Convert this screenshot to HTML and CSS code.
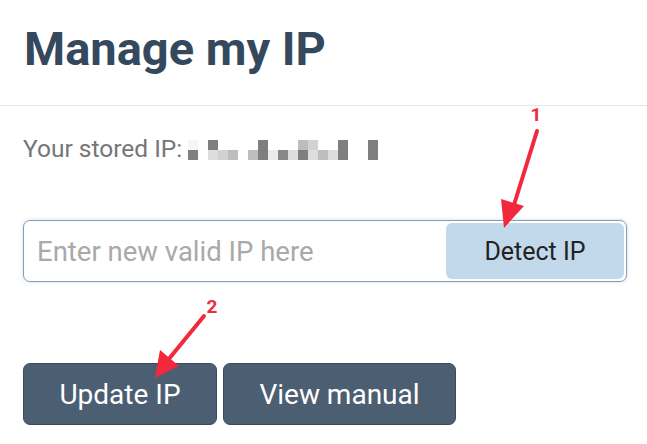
FILE: index.html
```html
<!DOCTYPE html>
<html>
<head>
<meta charset="utf-8">
<link rel="stylesheet" href="styles.css">
</head>
<body>
<header class="header">
  <h1 class="title">Manage my IP</h1>
</header>
<main class="content">
  <p class="stored">Your stored IP:
    <span class="pix">
      <span class="col"><i class="c1"></i><i class="c9"></i></span>
      <span class="col"><i></i><i></i></span>
      <span class="col"><i class="c8"></i><i class="c3"></i></span>
      <span class="col"><i></i><i class="c4"></i></span>
      <span class="col"><i></i><i class="c5"></i></span>
      <span class="col"><i></i><i></i></span>
      <span class="col"><i></i><i class="c5"></i></span>
      <span class="col"><i class="c8"></i><i class="c8"></i></span>
      <span class="col"><i></i><i class="c2"></i></span>
      <span class="col"><i></i><i class="c7"></i></span>
      <span class="col"><i></i><i class="c3"></i></span>
      <span class="col"><i class="c5"></i><i class="c8"></i></span>
      <span class="col"><i class="c4"></i><i class="c3"></i></span>
      <span class="col"><i></i><i class="c5"></i></span>
      <span class="col"><i></i><i class="c3"></i></span>
      <span class="col"><i class="c8"></i><i class="c8"></i></span>
      <span class="col"><i></i><i></i></span>
      <span class="col"><i></i><i></i></span>
      <span class="col"><i class="c8"></i><i class="c8"></i></span>
    </span>
  </p>
  <div class="ipgroup">
    <input class="ipinput" type="text" placeholder="Enter new valid IP here">
    <button class="detect">Detect IP</button>
  </div>
  <div class="actions">
    <button class="btn">Update IP</button>
    <button class="btn">View manual</button>
  </div>
</main>
<svg class="annot" width="647" height="444" viewBox="0 0 647 444">
  <text x="536" y="121" class="num" text-anchor="middle">1</text>
  <line x1="537" y1="131" x2="513" y2="208" class="aline"/>
  <polygon points="504,228 501,199 524,206" class="ahead"/>
  <text x="212" y="313" class="num" text-anchor="middle">2</text>
  <line x1="204" y1="316" x2="168" y2="360" class="aline"/>
  <polygon points="155,378 160,350 179,366" class="ahead"/>
</svg>
</body>
</html>
```
FILE: styles.css
```css
html, body {
  margin: 0;
  padding: 0;
  background: #ffffff;
}
body {
  font-family: Roboto, "Liberation Sans", sans-serif;
  position: relative;
  width: 647px;
  height: 444px;
  overflow: hidden;
}
.header {
  padding: 20px 24px 0;
  height: 85px;
  border-bottom: 1px solid #e6e6e6;
}
.title {
  margin: 0;
  font-size: 47px;
  line-height: 58px;
  font-weight: 700;
  color: #34495e;
}
.content {
  padding: 0 20px 0 23px;
}
.stored {
  margin: 29px 0 0;
  font-size: 24.5px;
  line-height: 28px;
  color: #767676;
  display: flex;
  align-items: center;
}
.pix {
  display: inline-flex;
  margin-left: 6px;
  margin-top: 2px;
}
.col {
  display: flex;
  flex-direction: column;
}
.col i {
  display: block;
  width: 10px;
  height: 10px;
  background: #ffffff;
}
.col i.c1 { background: #f5f5f5; }
.col i.c2 { background: #ececec; }
.col i.c3 { background: #dddddd; }
.col i.c4 { background: #d2d2d2; }
.col i.c5 { background: #bdbdbd; }
.col i.c7 { background: #888888; }
.col i.c8 { background: #7f7f7f; }
.col i.c9 { background: #808080; }
.ipgroup {
  margin-top: 57px;
  height: 62px;
  box-sizing: border-box;
  border: 1px solid #8c9cb0;
  border-radius: 7px;
  box-shadow: 0 0 4px rgba(120, 160, 210, 0.35);
  display: flex;
  align-items: stretch;
  padding: 2px;
  background: #fff;
}
.ipinput {
  flex: 1;
  border: 0;
  outline: none;
  padding: 0 0 0 11px;
  font-family: Roboto, "Liberation Sans", sans-serif;
  font-size: 27.5px;
  color: #333;
  background: transparent;
  min-width: 0;
}
.ipinput::placeholder {
  color: #a9a9a9;
}
.detect {
  width: 178px;
  border: 0;
  border-radius: 6px;
  background: #c2d8eb;
  color: #222;
  font-family: Roboto, "Liberation Sans", sans-serif;
  font-size: 25px;
  padding: 0;
}
.actions {
  margin-top: 81px;
  display: flex;
  gap: 6px;
}
.btn {
  height: 62px;
  border: 1px solid #3b4b5c;
  border-radius: 7px;
  background: #4b5e72;
  color: #ffffff;
  font-family: Roboto, "Liberation Sans", sans-serif;
  font-size: 28px;
  padding: 0;
}
.btn:first-child { width: 194px; }
.btn:last-child { width: 233px; }
.annot {
  position: absolute;
  left: 0;
  top: 0;
  pointer-events: none;
}
.num {
  font-family: Roboto, "Liberation Sans", sans-serif;
  font-weight: 700;
  font-size: 19px;
  fill: #f2283c;
}
.aline {
  stroke: #f2283c;
  stroke-width: 4;
  stroke-linecap: round;
}
.ahead {
  fill: #f2283c;
}
```
